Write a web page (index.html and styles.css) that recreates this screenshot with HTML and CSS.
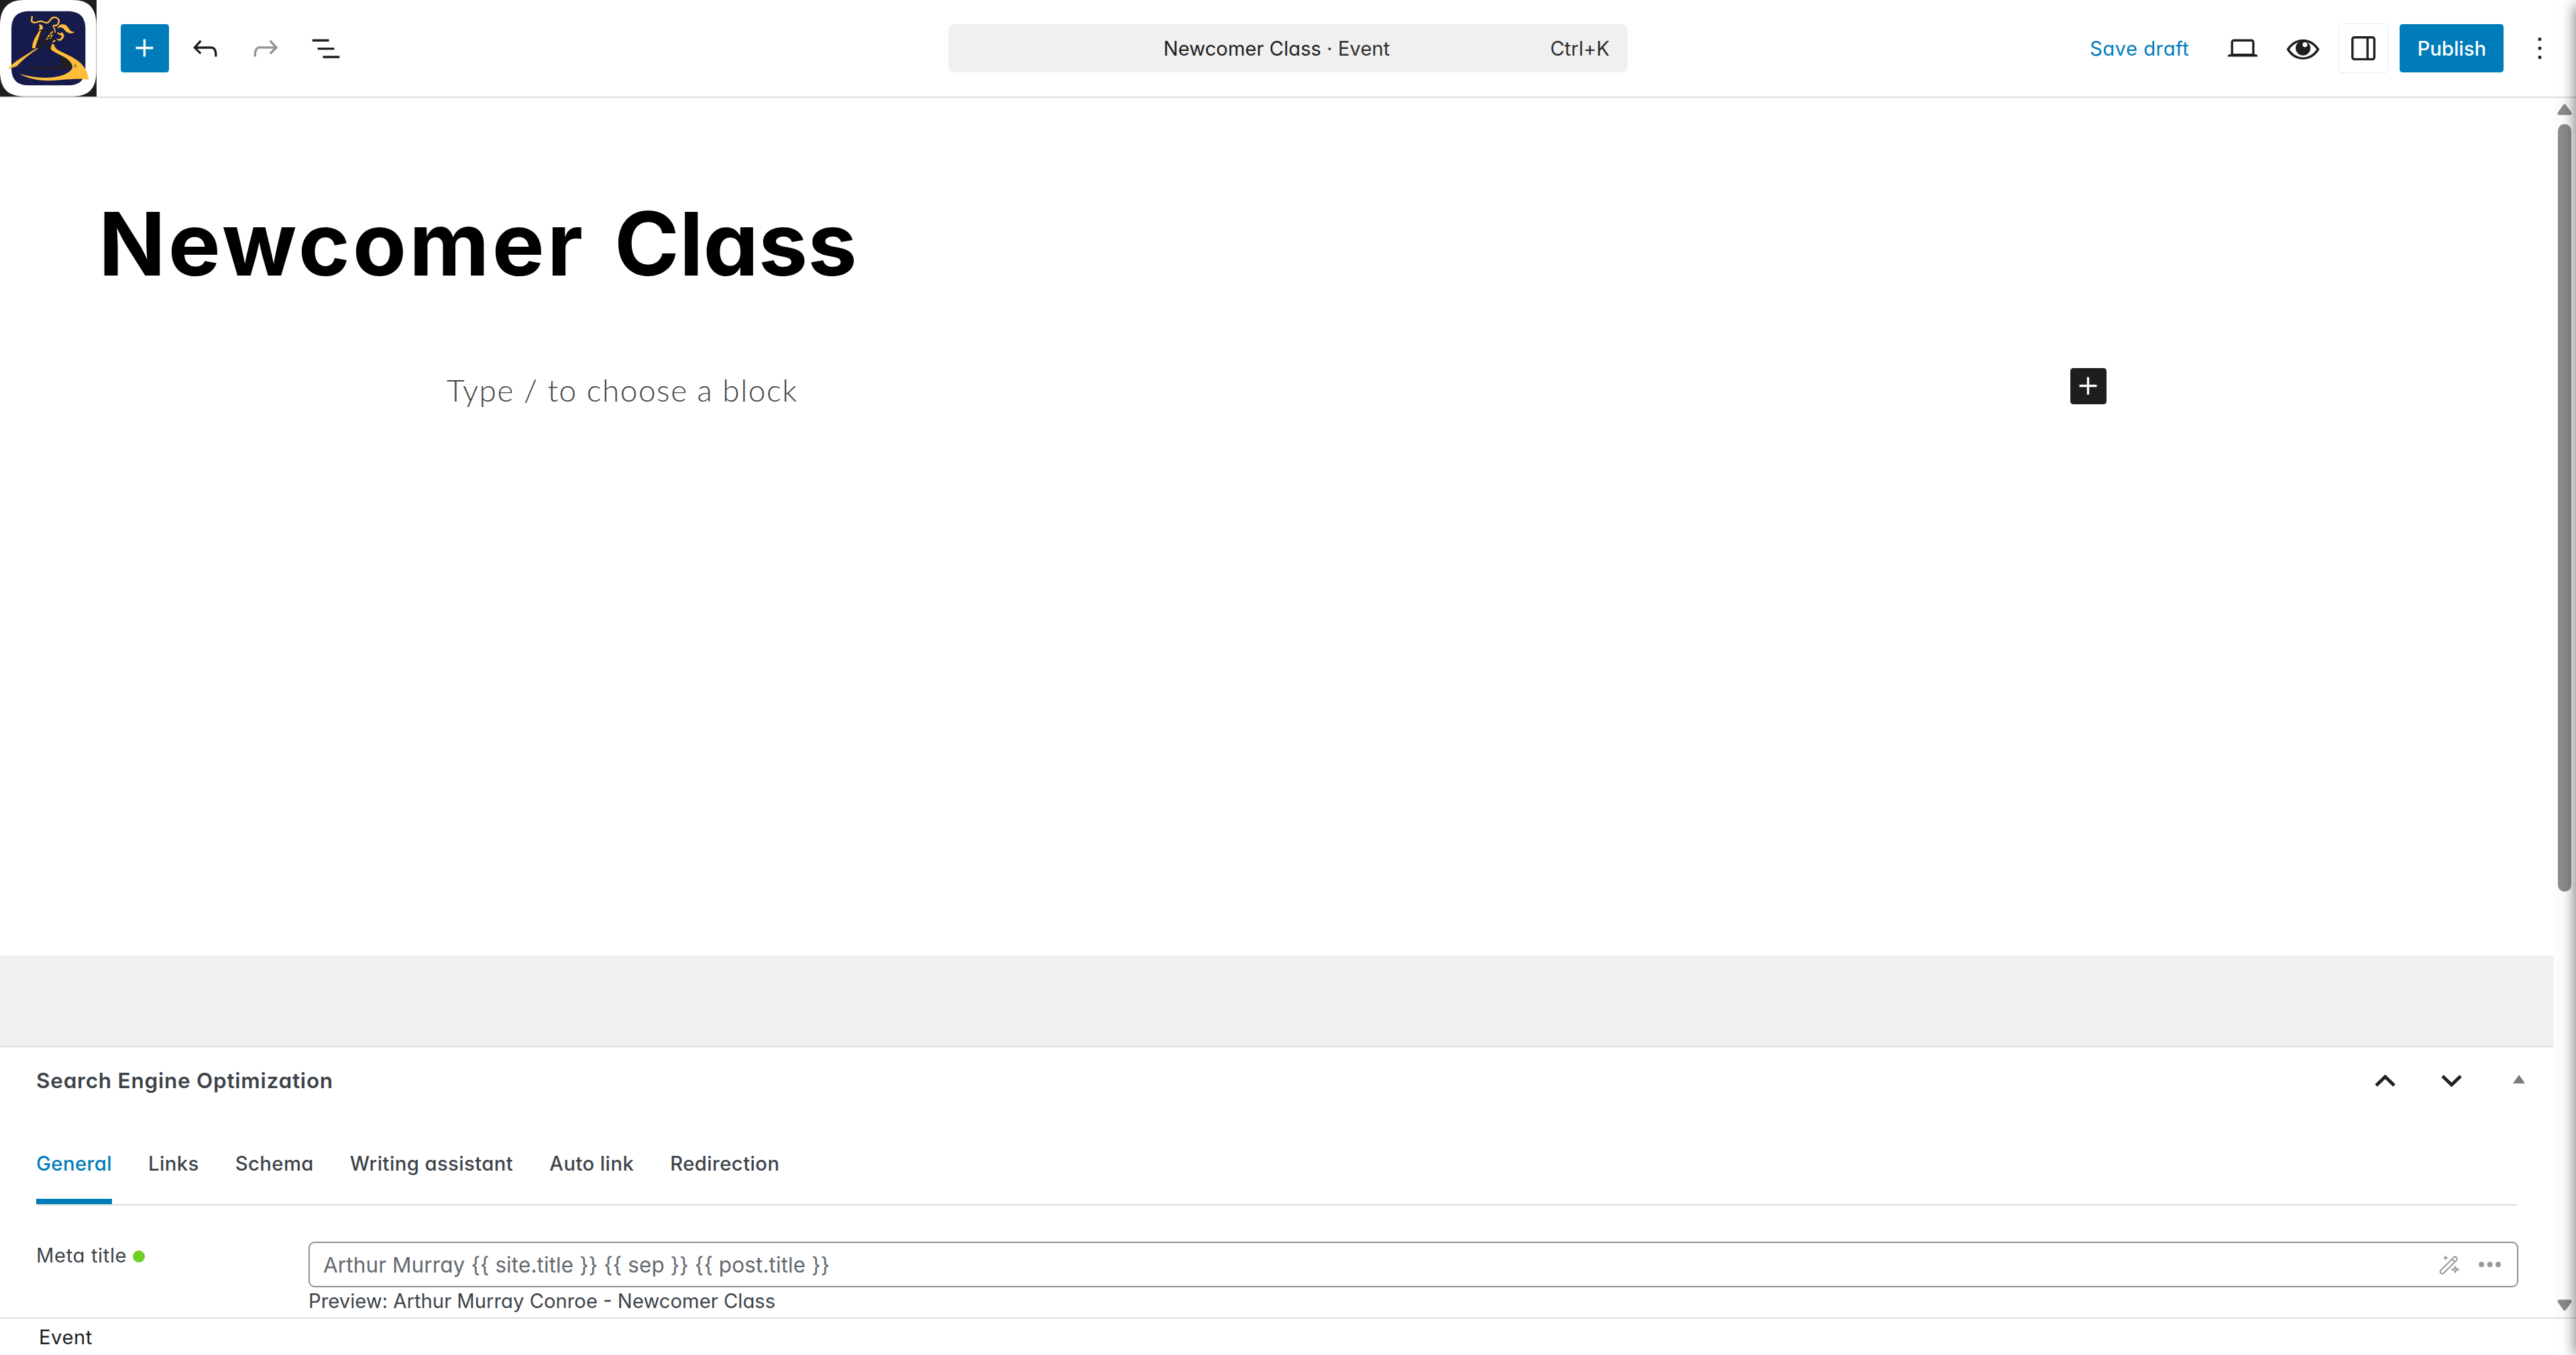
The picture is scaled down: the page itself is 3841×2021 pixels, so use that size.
FILE: index.html
```html
<!DOCTYPE html>
<html lang="en">

<head>
    <meta charset="UTF-8">
    <meta name="viewport" content="width=device-width, initial-scale=1.0">
    <title>Newcomer Class - Edit Event</title>
    <link rel="stylesheet" href="styles.css">
</head>

<body>
    <div class="editor">
        <header class="header">
            <a class="site-logo">
                <svg viewBox="0 0 432 432">
                    <rect width="432" height="432" fill="#1e1e1e" />
                    <path fill="#fff" d="M110 0H322C400 0 430 38 431 112V320C430 396 398 431 322 431H110C34 431 1 396 0 320V112C1 38 34 0 110 0Z" />
                    <path fill="#161b4b" d="M130 50H302C358 50 382 78 382 130V302C382 356 358 382 302 382H130C76 382 51 356 51 302V130C51 78 76 50 130 50Z" />
                    <g fill="#231f20">
                        <path d="M156 128C164 140 176 143 188 137C200 133 214 142 228 132L230 139C214 148 202 143 190 144C172 150 158 146 156 128Z" />
                        <path d="M184 146C188 160 192 166 188 176C180 188 176 196 178 203C190 190 204 172 216 158L236 128C246 146 238 164 232 178L224 196C226 214 232 222 252 230C294 246 328 272 325 306C290 301 244 313 196 312C166 310 142 304 118 293C158 300 206 309 262 296C286 280 278 252 252 238C236 228 222 222 214 220C216 206 222 194 226 184C204 196 190 208 172 218C146 236 124 254 92 276C112 252 136 236 164 216C160 190 168 164 184 146Z" />
                    </g>
                    <g fill="#febd3b">
                        <path d="M174 109C183 108 191 112 192 122L191 130L173 137C178 128 178 118 174 109Z" />
                        <path d="M184 138L178 150C174 172 162 190 158 216H144C144 190 156 170 166 154C170 146 173 141 176 138Z" />
                        <path d="M171 217C136 240 106 264 75 296C62 300 52 302 37 311C45 292 70 276 100 256C124 240 146 226 163 217Z" />
                        <path d="M233 194L243 201C244 213 254 222 274 232C320 252 350 270 368 290C388 312 394 334 397 357C350 346 262 361 210 361C158 360 112 346 88 330C140 346 200 353 256 343C292 335 318 320 324 302C325 278 300 260 262 242C242 232 228 226 227 216Z" />
                        <path d="M257 130C258 112 276 104 292 111C310 120 306 142 333 143C322 154 300 149 290 136C280 121 266 118 257 130Z" />
                        <path d="M236 115C246 122 250 134 249 148L244 144C244 132 240 124 234 119Z" />
                        <path d="M256 144C266 144 264 154 272 148L276 144C288 152 290 166 280 174L272 182C262 184 254 180 252 172L262 176C268 172 280 168 274 158C266 158 256 154 256 144Z" />
                        <path d="M236 138L238 145L226 153L221 151Z M219 155L227 158L218 166L211 165Z M229 157L236 152L234 163L227 166Z M210 169L219 171L205 181Z M222 170L231 166L227 176Z M243 178L250 182L240 190L234 187Z" />
                    </g>
                    <path fill="none" stroke="#febd3b" stroke-width="7" d="M143 72C145 82 139 86 142 95C154 110 170 94 184 95C196 96 202 106 214 101C226 96 225 80 240 78C258 75 268 90 262 103C258 113 248 116 238 113" />
                    <circle cx="337" cy="295" r="6" fill="none" stroke="#5f4a24" stroke-width="2" />
                    <circle cx="337" cy="295" r="2.5" fill="#5f4a24" />
                </svg>
            </a>
            <div class="tools">
                <button class="btn primary add">
                    <svg class="icon" viewBox="0 0 24 24"><path d="M11 12.5V17.5H12.5V12.5H17.5V11H12.5V6H11V11H6V12.5H11Z" /></svg>
                </button>
                <button class="btn">
                    <svg class="icon" viewBox="0 0 24 24"><path d="M18.3 11.7c-.6-.6-1.4-.9-2.3-.9H6.7l2.9-3.3-1.1-1-4.5 5L8.5 16l1-1-2.7-2.7H16c.5 0 .9.2 1.3.5 1 1 1 3.4 1 4.5v.3h1.5v-.2c0-1.5 0-4.3-1.5-5.7z" /></svg>
                </button>
                <button class="btn disabled">
                    <svg class="icon" viewBox="0 0 24 24"><path d="M15.6 6.5l-1.1 1 2.9 3.3H8c-.9 0-1.7.3-2.3.9-1.4 1.5-1.4 4.2-1.4 5.6v.2h1.5v-.3c0-1.1 0-3.5 1-4.5.3-.3.7-.5 1.3-.5h9.2L14.5 15l1.1 1.1 4.6-4.6-4.6-5z" /></svg>
                </button>
                <button class="btn">
                    <svg class="icon" viewBox="0 0 24 24"><path d="M3 6h11v1.5H3V6Zm3.5 5.5h11V13h-11v-1.5ZM21 17H10v1.5h11V17Z" /></svg>
                </button>
            </div>

            <div class="command-bar">
                <span></span>
                <span class="document-title">Newcomer Class <i>· Event</i></span>
                <span class="shortcut">Ctrl+K</span>
            </div>

            <div class="settings">
                <button class="btn text save">Save draft</button>
                <button class="btn">
                    <svg class="icon" viewBox="0 0 24 24"><path d="M20.5 16h-.7V8c0-1.1-.9-2-2-2H6.2c-1.1 0-2 .9-2 2v8h-.7c-.8 0-1.5.7-1.5 1.5h20c0-.8-.7-1.5-1.5-1.5zM5.7 8c0-.3.2-.5.5-.5h11.6c.3 0 .5.2.5.5v7.6H5.7V8z" /></svg>
                </button>
                <button class="btn">
                    <svg class="icon" viewBox="0 0 24 24">
                        <path fill-rule="evenodd" d="M12 6.1C7 6.1 3.4 9 1.1 12.700 3.400 16.700 7 19.400 12 19.400S20.600 16.700 22.900 12.700C20.600 9 17 6.100 12 6.100ZM12 7.500C16 7.500 19 9.800 21 12.700 19 15.600 16 18 12 18S5 15.600 3 12.700C5 9.800 8 7.500 12 7.500Z" />
                        <circle cx="12" cy="11.900" r="4.900" />
                        <circle cx="13.300" cy="9.600" r="1.600" fill="#fff" />
                    </svg>
                </button>
                <button class="btn outlined">
                    <svg class="icon" viewBox="0 0 24 24"><path fill-rule="evenodd" d="M18 4H6c-1.100 0-2 .9-2 2v12c0 1.100.9 2 2 2h12c1.100 0 2-.9 2-2V6c0-1.100-.9-2-2-2zm-4 14.500H6c-.3 0-.5-.2-.5-.5V6c0-.3.2-.5.5-.5h8v13zm4.500-.5c0 .3-.2.5-.5.5h-2.500v-13H18c.3 0 .5.2.5.5v12z" /></svg>
                </button>
                <button class="btn text primary">Publish</button>
                <button class="btn">
                    <svg class="icon" viewBox="0 0 24 24"><path d="M13 19h-2v-2h2v2zm0-6h-2v-2h2v2zm0-6h-2V5h2v2z" /></svg>
                </button>
            </div>
        </header>

        <div class="main">
            <div class="content">
                <div class="canvas">
                    <h1>Newcomer <span>Class</span></h1>
                    <div class="block">
                        <p>Type / to choose a block</p>
                        <button class="inserter">
                            <svg class="icon" viewBox="0 0 24 24"><path d="M11 12.500V17.500H12.500V12.500H17.500V11H12.500V6H11V11H6V12.500H11Z" /></svg>
                        </button>
                    </div>
                </div>

                <section class="metabox">
                    <div class="metabox-header">
                        <h2>Search Engine Optimization</h2>
                        <svg class="chevron" viewBox="0 0 31 18"><path d="M2 16 15.500 3 29 16" /></svg>
                        <svg class="chevron" viewBox="0 0 31 18"><path d="M2 2 15.500 15 29 2" /></svg>
                        <svg class="toggle" viewBox="0 0 18 13"><path d="M9 0 18 13H0Z" /></svg>
                    </div>
                    <nav class="tabs">
                        <a class="active">General</a>
                        <a>Links</a>
                        <a>Schema</a>
                        <a>Writing assistant</a>
                        <a>Auto link</a>
                        <a>Redirection</a>
                    </nav>
                    <div class="field">
                        <label>Meta title <span class="dot"></span></label>
                        <div>
                            <div class="input">
                                <span>Arthur Murray {{ site.title }} {{ sep }} {{ post.title }}</span>
                                <svg class="wand" viewBox="0 0 30 29">
                                    <path class="line" d="M2.500 22.500 21.500 3.500A3 3 0 0 1 25.800 7.800L6.800 26.800A3 3 0 0 1 2.500 22.500ZM19 6 23.300 10.300" />
                                    <path d="M9.500 0 10.800 2.800 13.500 4 10.800 5.200 9.500 8 8.200 5.200 5.500 4 8.200 2.800Z" />
                                    <path class="line" d="M24 17.500 25.300 20.300 28.500 21.500 25.300 22.700 24 25.500 22.700 22.700 19.500 21.500 22.700 20.300Z" />
                                </svg>
                                <svg class="more" viewBox="0 0 33 8"><circle cx="4" cy="4" r="4" /><circle cx="16.500" cy="4" r="4" /><circle cx="29" cy="4" r="4" /></svg>
                            </div>
                            <p class="preview">Preview: Arthur Murray Conroe - Newcomer Class</p>
                        </div>
                    </div>
                </section>
            </div>

            <div class="scrollbar">
                <svg viewBox="0 0 22 17"><path d="M11 3 19 14H3Z" /></svg>
                <div class="thumb"></div>
                <svg class="down" viewBox="0 0 22 17"><path d="M11 14 19 3H3Z" /></svg>
            </div>
        </div>

        <footer class="footer">Event</footer>
        <div class="edge-shadow"></div>
    </div>
</body>

</html>
```
FILE: styles.css
```css
* {
    box-sizing: border-box;
}

body {
    margin: 0;
    font-family: Inter, "Open Sans", sans-serif;
    font-feature-settings: "cv11";
    font-size: 29.25px;
    color: #1e1e1e;
    background: #fff;
}

h1,
h2,
p {
    margin: 0;
}

svg {
    display: block;
    flex: none;
}

.editor {
    position: relative;
    display: flex;
    flex-direction: column;
    height: 2021px;
    overflow: hidden;
}

/* header */
.header {
    display: grid;
    grid-template-columns: 1fr 1013px 1fr;
    grid-template-rows: 144px;
    align-items: center;
    height: 146px;
    border-bottom: 2px solid #ddd;
}

.site-logo {
    grid-area: 1 / 1;
    width: 144px;
}

.tools {
    grid-area: 1 / 1;
    display: flex;
    gap: 18px;
    margin-left: 180px;
}

.btn {
    display: flex;
    align-items: center;
    justify-content: center;
    width: 72px;
    height: 72px;
    padding: 0;
    border: none;
    border-radius: 4.5px;
    background: none;
    font: inherit;
    color: #1e1e1e;
}

.btn.text {
    width: auto;
    padding: 0 26px;
    white-space: nowrap;
}

.btn.save {
    color: #007cba;
    letter-spacing: 0.5px;
}

.btn.primary {
    background: #007cba;
    color: #fff;
    font-weight: 500;
}

.btn.disabled {
    color: #949494;
}

.btn.outlined {
    box-shadow: 0 0 0 1px #deedf7;
}

.icon {
    width: 54px;
    height: 54px;
    fill: currentColor;
}

.command-bar {
    display: grid;
    grid-template-columns: 1fr auto 1fr;
    align-items: center;
    height: 72px;
    padding: 0 27px;
    border-radius: 9px;
    background: #f0f0f0;
}

.document-title {
    padding-right: 34px;
}

.document-title i {
    font-style: normal;
    color: #2f2f2f;
}

.shortcut {
    text-align: right;
    color: #2f2f2f;
}

.settings {
    display: flex;
    justify-content: flex-end;
    gap: 18px;
    padding-right: 18px;
}

/* canvas */
.main {
    display: flex;
    height: 1819px;
}

.content {
    flex: 1;
    overflow: hidden;
    background: #f0f0f0;
}

.canvas {
    height: 1279px;
    padding: 138px 0 0 147px;
    background: #fff;
    margin-bottom: 135px;
}

h1 {
    font-size: 131px;
    font-weight: 700;
    line-height: 160px;
    letter-spacing: 4px;
    word-spacing: 8px;
    color: #000;
}

h1 span {
    letter-spacing: 0;
}

.block {
    display: flex;
    align-items: flex-start;
    justify-content: space-between;
    width: 2475px;
    margin: 105px 0 0 519px;
}

.block p {
    font: 300 46px/66px Lato, sans-serif;
    letter-spacing: 1.5px;
    color: #444;
}

.inserter {
    width: 54px;
    height: 54px;
    padding: 0;
    border: none;
    border-radius: 4.5px;
    background: #1e1e1e;
    color: #fff;
}

/* metabox */
.metabox {
    height: 420px;
    padding: 0 54px;
    border-top: 2px solid #ddd;
    background: #fff;
    color: #3c434a;
}

.metabox-header {
    display: flex;
    align-items: center;
    height: 99px;
    margin-right: -12px;
}

h2 {
    flex: 1;
    font-size: 31.5px;
    font-weight: 600;
    letter-spacing: 0.77px;
}

.chevron {
    width: 31px;
    height: 18px;
    margin-right: 68px;
    fill: none;
    stroke: #1d2327;
    stroke-width: 5;
}

.toggle {
    width: 18px;
    height: 13px;
    margin: 0 0 4px 8px;
    fill: #787c82;
}

.tabs {
    display: flex;
    gap: 54px;
    height: 123px;
    margin-top: 14px;
    border-bottom: 2px solid #ddd;
    line-height: 121px;
    font-weight: 500;
    letter-spacing: 0.42px;
}

.tabs .active {
    color: #007cba;
    box-shadow: inset 0 -8px #007cba;
}

.field {
    display: grid;
    grid-template-columns: 406px 1fr;
    margin: 54px -2px 0 0;
    line-height: 41px;
}

.field label {
    letter-spacing: 0.6px;
}

.dot {
    display: inline-block;
    width: 18px;
    height: 18px;
    border-radius: 50%;
    background: #6fcf27;
}

.input {
    display: flex;
    align-items: center;
    height: 68px;
    padding: 0 24px 0 20px;
    border: 2px solid #8c8f94;
    border-radius: 9px;
    font-size: 31.5px;
    color: #646970;
}

.input span {
    flex: 1;
    letter-spacing: 0.1px;
}

.wand {
    width: 30px;
    height: 29px;
    fill: #999;
}

.wand .line {
    fill: none;
    stroke: #999;
    stroke-width: 2;
}

.more {
    width: 33px;
    height: 8px;
    margin-left: 29px;
    fill: #999;
}

/* scrollbar */
.scrollbar {
    display: flex;
    flex-direction: column;
    align-items: center;
    width: 34px;
    padding: 9px 0 10px;
    background: #fcfcfc;
}

.scrollbar svg {
    width: 22px;
    height: 17px;
    fill: #8b8b8b;
    stroke: #8b8b8b;
    stroke-width: 5;
    stroke-linejoin: round;
}

.scrollbar .down {
    margin-top: auto;
}

.thumb {
    width: 20px;
    height: 1145px;
    margin-top: 13px;
    border-radius: 10px;
    background: #8b8b8b;
}

.footer {
    height: 56px;
    padding-left: 58px;
    border-top: 2px solid #ddd;
    line-height: 56px;
    letter-spacing: 0.5px;
}

/* shadow along the right side of the window */
.edge-shadow {
    position: absolute;
    top: 8px;
    bottom: 0;
    right: -20px;
    width: 20px;
    box-shadow: 0 0 22px rgba(0, 0, 0, 0.6);
}
```
